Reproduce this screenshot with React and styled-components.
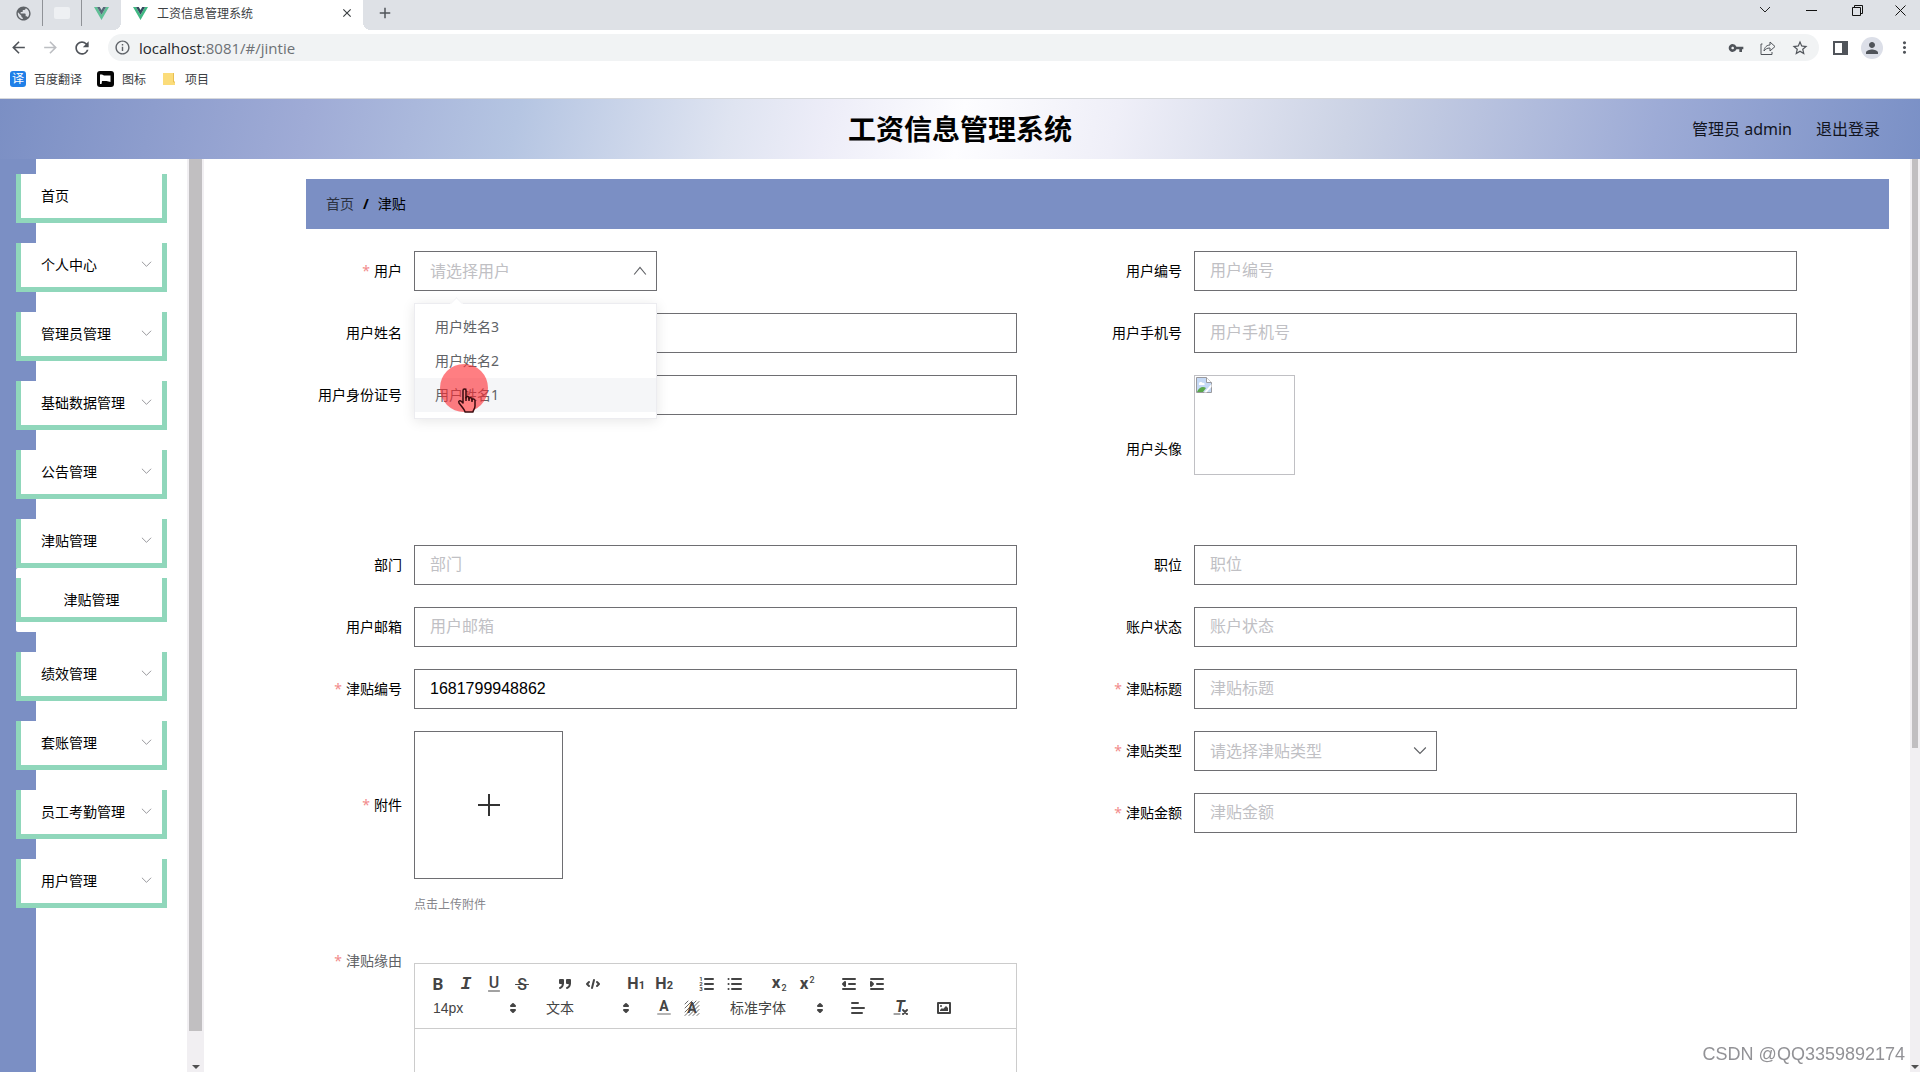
import React from 'react';
import styled, {createGlobalStyle, css} from 'styled-components';
import {
    MdArrowBack,
    MdArrowForward,
    MdRefresh,
    MdInfoOutline,
    MdVpnKey,
    MdStarBorder,
    MdPerson,
    MdMoreVert,
    MdPublic,
    MdClose,
    MdAdd
} from 'react-icons/md';

const BLUE = '#7b8fc4';
const GREEN = '#90d7bb';

const GlobalStyle = createGlobalStyle`
    * {
        box-sizing: border-box;
    }
    body {
        margin: 0;
        background: #fff;
        color: #000;
        font-family: "Noto Sans", "Noto Sans CJK SC", sans-serif;
        font-size: 14px;
    }
    button, input, select {
        font: inherit;
        color: inherit;
        margin: 0;
        padding: 0;
        border: 0;
        background: none;
    }
    a {
        color: inherit;
        text-decoration: none;
    }
    ul {
        list-style: none;
        margin: 0;
        padding: 0;
    }
`;

const Page = styled.div`
    display: flex;
    flex-direction: column;
    height: 100vh;
    overflow: hidden;
`;

/* browser bars */

const TabStrip = styled.div`
    display: flex;
    height: 30px;
    padding-left: 4px;
    background: #dee1e6;
`;

const PinnedTab = styled.button`
    display: flex;
    align-items: center;
    justify-content: center;
    width: 39px;
    height: 26px;
    border-right: 1px solid ${props => (props.$last ? 'transparent' : '#8f9297')};
    color: #5f6368;
    opacity: ${props => (props.$faded ? 0.8 : 1)};
`;

const BlankIcon = styled.span`
    width: 16px;
    height: 12px;
    border-radius: 2px;
    background: #eef0f3;
`;

const ActiveTab = styled.div`
    position: relative;
    display: flex;
    align-items: center;
    gap: 9px;
    width: 242px;
    height: 30px;
    margin-right: 12px;
    padding: 0 9px 4px 12px;
    background: #fff;
    font-size: 12px;
    color: #3c4043;

    &::before, &::after {
        content: '';
        position: absolute;
        bottom: 0;
        width: 8px;
        height: 8px;
    }
    &::before {
        left: -8px;
        background: radial-gradient(circle at 0 0, transparent 8px, #fff 8px);
    }
    &::after {
        right: -8px;
        background: radial-gradient(circle at 100% 0, transparent 8px, #fff 8px);
    }
`;

const TabTitle = styled.span`
    flex: 1;
`;

const IconButton = styled.button`
    display: flex;
    align-items: center;
    justify-content: center;
    width: ${props => props.$width || 32}px;
    height: 26px;
    color: ${props => props.$color || '#50545a'};
`;

const WindowButtons = styled.div`
    display: flex;
    align-items: center;
    height: 20px;
    margin-left: auto;
`;

const AddressRow = styled.div`
    display: flex;
    align-items: center;
    height: 35px;
    padding: 0 0 0 2px;
`;

const AddressBar = styled.div`
    display: flex;
    flex: 1;
    align-items: center;
    height: 27px;
    margin: 0 5px 0 10px;
    padding: 0 3px 0 6px;
    border-radius: 14px;
    background: #f1f3f4;
    color: #5f6368;
`;

const Address = styled.div`
    flex: 1;
    padding-left: 8px;
    font-family: "Open Sans", sans-serif;
    font-size: 15px;
    color: #6d7175;

    b {
        font-weight: 400;
        color: #26282b;
    }
`;

const Avatar = styled.span`
    display: flex;
    align-items: center;
    justify-content: center;
    width: 22px;
    height: 22px;
    border-radius: 50%;
    background: #dcdfe8;
`;

const BookmarkBar = styled.nav`
    display: flex;
    align-items: center;
    gap: 15px;
    height: 34px;
    padding: 0 10px 5px;
    border-bottom: 1px solid #d6d8dc;
    font-size: 12px;
    color: #3c4043;
`;

const Bookmark = styled.a`
    display: flex;
    align-items: center;
    gap: 8px;
`;

const Badge = styled.span`
    width: 16px;
    height: 16px;
    border-radius: 3px;
    background: #2080e8;
    color: #fff;
    line-height: 16px;
    text-align: center;
`;

/* page header */

const Header = styled.header`
    display: grid;
    grid-template-columns: 1fr auto 1fr;
    flex: none;
    align-items: center;
    height: 60px;
    padding: 0 40px;
    background: linear-gradient(102deg, #7b8fc4 0%, #9fabd6 16%, #b5c5e2 27%, #dfe4f1 38%, #ededf8 43%, #fdfdff 50%, #efeff8 58%, #ccd3e5 70%, #9dabd6 86%, #7a90c6 100%);
`;

const Title = styled.h1`
    grid-column: 2;
    margin: 0;
    font-size: 28px;
    font-weight: 700;
    line-height: 60px;
`;

const Account = styled.div`
    display: flex;
    justify-content: flex-end;
    gap: 24px;
    padding-bottom: 2px;
    font-size: 16px;
    color: #12151f;
`;

const Body = styled.div`
    display: flex;
    flex: 1;
    min-height: 0;
`;

/* side menu */

const Menu = styled.nav`
    display: flex;
    flex-direction: column;
    flex: none;
    gap: 20px;
    width: 187px;
    padding: 15px 20px 0 16px;
    background: linear-gradient(to right, ${BLUE} 36px, #fff 36px);
`;

const menuBox = css`
    border: 5px solid ${GREEN};
    border-top: 0;
    background: #fff;
`;

const MenuItem = styled.button`
    display: flex;
    align-items: center;
    justify-content: space-between;
    width: 100%;
    height: 49px;
    padding: 0 10px 2px 20px;
    ${menuBox}
`;

const SubMenu = styled.ul`
    padding: 10px 0;
    border-radius: 2px;
    background: #fff;
`;

const SubLink = styled.a`
    display: block;
    height: 44px;
    line-height: 44px;
    text-align: center;
    ${menuBox}
`;

const Scrollbar = styled.div`
    display: flex;
    flex-direction: column;
    flex: none;
    justify-content: space-between;
    align-items: center;
    width: ${props => props.$width}px;
    overflow: hidden;
    background: #f1eff2;
`;

const Thumb = styled.div`
    width: calc(100% - 4px);
    height: ${props => props.$size}%;
    background: #c1bfc1;
`;

const ScrollArrow = styled.span`
    margin-bottom: 3px;
    border: 4px solid transparent;
    border-top-color: #505050;
    border-bottom: 0;
`;

/* form */

const Main = styled.main`
    flex: 1;
    min-width: 0;
    overflow: hidden;
    padding: 20px 21px 0 102px;
`;

const Breadcrumb = styled.nav`
    display: flex;
    align-items: center;
    gap: 9px;
    height: 50px;
    padding: 0 20px 2px;
    background: ${BLUE};

    a {
        color: #2b3140;
    }
    span {
        font-weight: 700;
    }
`;

const Form = styled.form`
    display: grid;
    grid-template-columns: 1fr 1fr;
    gap: 22px 0;
    padding: 22px 23px 0 0;
`;

const FieldRow = styled.div`
    display: grid;
    grid-template-columns: 96px 1fr;
    gap: 0 12px;
    align-items: start;
    grid-column: ${props => props.$column || 'auto'};
    grid-row: ${props => (props.$span ? `span ${props.$span}` : 'auto')};
    padding-right: 69px;
`;

const Label = styled.label`
    line-height: ${props => (props.$tall ? 148 : 40)}px;
    text-align: right;
    white-space: nowrap;
    color: ${props => (props.$soft ? '#606266' : '#000')};
`;

const Star = styled.span`
    margin-right: 4px;
    color: #f28b8b;
`;

const boxed = css`
    height: 40px;
    border: 1px solid #6e6e72;
    background: #fff;
    font-family: "Liberation Sans", "Noto Sans CJK SC", sans-serif;
    font-size: 16px;
`;

const TextInput = styled.input`
    width: 100%;
    padding: 0 15px;
    ${boxed}

    &::placeholder {
        color: #c0c0c4;
    }
`;

const SelectWrap = styled.div`
    position: relative;
    width: 243px;

    > svg {
        position: absolute;
        top: 13px;
        right: 10px;
        pointer-events: none;
    }
`;

const Select = styled.select`
    width: 100%;
    padding: 0 15px;
    appearance: none;
    color: #c0c0c4;
    ${boxed}
`;

const Popper = styled.ul`
    position: absolute;
    z-index: 2;
    top: 52px;
    left: 0;
    width: 100%;
    padding: 6px 0;
    border: 1px solid #ececf0;
    background: #fff;
    box-shadow: 0 2px 12px rgba(0, 0, 0, 0.1);

    &::before {
        content: '';
        position: absolute;
        top: -5px;
        left: 37px;
        width: 8px;
        height: 8px;
        border: 1px solid #f4f4f6;
        border-width: 1px 0 0 1px;
        background: #fff;
        transform: rotate(45deg);
    }
`;

const Option = styled.li`
    padding: 0 20px;
    line-height: 34px;
    color: #606266;
    background: ${props => (props.$hover ? '#f5f6f8' : 'transparent')};
`;

const Pointer = styled.div`
    position: absolute;
    top: 60px;
    left: 25px;
    width: 48px;
    height: 48px;
    padding: 24px 0 0 17px;
    border-radius: 50%;
    background: rgba(255, 40, 46, 0.6);
`;

const Photo = styled.div`
    width: 101px;
    height: 100px;
    padding: 1px;
    border: 1px solid #c0c0c4;
`;

const Upload = styled.button`
    display: flex;
    align-items: center;
    justify-content: center;
    width: 149px;
    height: 148px;
    border: 1px solid #6e6e72;
`;

const Tip = styled.div`
    margin: 14px 0 2px;
    font-size: 12px;
    line-height: 24px;
    color: #86868c;
`;

/* rich text editor */

const Editor = styled.div`
    margin-top: 22px;
    border: 1px solid #ccc;
    font-family: "Liberation Sans", "Noto Sans CJK SC", sans-serif;
    color: #444;
`;

const Tools = styled.div`
    display: flex;
    flex-direction: column;
    padding: 8px;
    border-bottom: 1px solid #ccc;
`;

const ToolRow = styled.div`
    display: flex;
    gap: 15px;
    padding-left: 1px;
`;

const ToolGroup = styled.div`
    display: flex;
`;

const Tool = styled.button`
    display: flex;
    align-items: center;
    justify-content: center;
    width: 28px;
    height: 24px;

    svg {
        overflow: visible;
    }
    svg text {
        font-family: Roboto, "Liberation Sans", sans-serif;
        font-weight: 700;
        fill: #444;
    }
`;

const Picker = styled.div`
    position: relative;
    width: ${props => props.$width}px;
    height: 24px;

    select {
        width: 100%;
        height: 24px;
        padding: 0 20px 0 9px;
        appearance: none;
    }
    svg {
        position: absolute;
        top: 3px;
        right: 0;
        pointer-events: none;
    }
`;

const TextArea = styled.div`
    min-height: 200px;
    padding: 12px 15px;
    outline: none;
`;

const Watermark = styled.div`
    position: fixed;
    right: 15px;
    bottom: 6px;
    font-family: "Liberation Sans", sans-serif;
    font-size: 18px;
    line-height: 24px;
    color: #929296;
`;

const VueLogo = () => (
    <svg width="15" height="13" viewBox="0 0 15 13">
        <path d="M0 0h3l4.500 7.800L12 0h3L7.500 13z" fill="#41b883" />
        <path d="M3 0h2.800l1.700 3L9.200 0H12L7.500 7.800z" fill="#35495e" />
    </svg>
);

const Chevron = ({size = 12, up = false, color = '#8f8f94'}) => (
    <svg width={size} height={size} viewBox="0 0 12 12" fill="none" stroke={color}>
        <path d={up ? 'M1 9l5-6 5 6' : 'M1 3l5 5 5-5'} />
    </svg>
);

const Hand = () => (
    <svg width="20" height="25" viewBox="0 0 20 25" fill="#ff7f80" stroke="#3a0d10" strokeWidth="1.500" strokeLinejoin="round">
        <path d="M6 15V2.500C6 .5 9 .5 9 2.500V10c0-2 3-2 3 0v1c0-2 3-1.500 3 0v1c0-1.500 3-1.500 3 .5V18c0 3-2 4-2 6H8c0-2-3-5-6-9-1-2 1-3 2.500-1.500z" />
        <path d="M9 9v4M12 10v3M15 11v3" />
    </svg>
);

const BrokenImage = () => (
    <svg width="16" height="16" viewBox="0 0 16 16" role="img" aria-label="用户头像">
        <path d="M.5.5h10l5 5v10H.5z" fill="#c5d9f5" stroke="#9a9a9e" />
        <path d="M10.500.5v5h5" fill="#fff" stroke="#9a9a9e" />
        <path d="M3 6.500c0-2 3-2 3.500-.5 1.500-.5 2.500.5 2 2H3z" fill="#fff" />
        <path d="M1 15c2-5 6-6 9-4l-3 4z" fill="#5aa84a" />
        <path d="M8 15.500L15.500 7v3L10.500 15.500z" fill="#fff" />
    </svg>
);

const ToolIcon = ({children}) => (
    <svg width="18" height="18" viewBox="0 0 18 18" fill="none" stroke="#444" strokeWidth="2" strokeLinecap="round" strokeLinejoin="round">
        {children}
    </svg>
);

const Glyph = props => <text x="9" y="14" textAnchor="middle" fontSize="15" stroke="none" {...props} />;

const Arrows = () => (
    <ToolIcon>
        <path d="M7 11l2 2 2-2zM7 7l2-2 2 2z" fill="#444" />
    </ToolIcon>
);

const icons = {
    bold: <Glyph y="15" fontSize="17">B</Glyph>,
    italic: <Glyph fontSize="18" fontStyle="italic" style={{fontFamily: 'Liberation Mono'}}>I</Glyph>,
    underline: <><Glyph y="13" fontSize="16" style={{fontWeight: 500}}>U</Glyph><path d="M3.500 16h11" strokeWidth="1" /></>,
    strike: <><Glyph y="15" fontSize="16" style={{fontWeight: 500}}>S</Glyph><path d="M2.500 9.500h13" strokeWidth="1" /></>,
    quote: (
        <>
            <path d="M4 5h3v3H4zM11 5h3v3h-3z" fill="#444" />
            <path d="M7 8c0 4-3 5-3 5M14 8c0 4-3 5-3 5" />
        </>
    ),
    code: <path d="M5 7L3 9l2 2M13 7l2 2-2 2M10 5L8 13" strokeWidth="2" />,
    h1: <><Glyph x="6" fontSize="16">H</Glyph><Glyph x="15" fontSize="11">1</Glyph></>,
    h2: <><Glyph x="6" fontSize="16">H</Glyph><Glyph x="15" fontSize="11">2</Glyph></>,
    ordered: (
        <>
            <path d="M7 4h8M7 9h8M7 14h8" />
            <Glyph x="3" y="6" fontSize="6">1</Glyph>
            <Glyph x="3" y="11" fontSize="6">2</Glyph>
            <Glyph x="3" y="16" fontSize="6">3</Glyph>
        </>
    ),
    bullet: <path d="M6 4h9M6 9h9M6 14h9M2.500 4h.1M2.500 9h.1M2.500 14h.1" />,
    sub: <><Glyph x="7" y="13" fontSize="17">x</Glyph><Glyph x="15" y="16" fontSize="9" style={{fontWeight: 500}}>2</Glyph></>,
    sup: <><Glyph x="7" y="14" fontSize="17">x</Glyph><Glyph x="15" y="8" fontSize="9" style={{fontWeight: 500}}>2</Glyph></>,
    outdent: (
        <>
            <path d="M3 14h12M3 4h12M9 9h6" />
            <path d="M5 7v4L3 9z" fill="#444" />
        </>
    ),
    indent: (
        <>
            <path d="M3 14h12M3 4h12M9 9h6" />
            <path d="M3 7v4l2-2z" fill="#444" />
        </>
    ),
    color: <><Glyph y="12" fontSize="14">A</Glyph><path d="M3 15h12" strokeOpacity="0.4" /></>,
    background: (
        <>
            <path d="M2 5l3-3M2 9l7-7M2 13L13 2M2 16.500L16 2.500M6 16.500L16 6.500M10 16.500l6-6M14 16.500l2-2" strokeWidth="1" strokeOpacity="0.800" />
            <Glyph y="14" fontSize="14">A</Glyph>
        </>
    ),
    align: <path d="M3 9h12M3 14h10M3 4h6" />,
    clean: (
        <>
            <Glyph x="8" y="13" fontSize="16" fontStyle="italic">T</Glyph>
            <path d="M2 15h6" strokeWidth="1" />
            <path d="M11 11l4 4M15 11l-4 4" />
        </>
    ),
    image: (
        <>
            <path d="M3 4h12v10H3z" />
            <circle cx="6" cy="7" r="1" fill="#444" stroke="none" />
            <path d="M5 12v-1l2-2 1 1 3-3 2 2v3z" fill="#444" stroke="none" />
        </>
    )
};

const formatTools = [
    ['bold', 'italic', 'underline', 'strike'],
    ['quote', 'code'],
    ['h1', 'h2'],
    ['ordered', 'bullet'],
    ['sub', 'sup'],
    ['outdent', 'indent']
];

const ToolSet = ({names}) => (
    <ToolGroup>
        {names.map(name => (
            <Tool type="button" key={name} aria-label={name}>
                <ToolIcon>{icons[name]}</ToolIcon>
            </Tool>
        ))}
    </ToolGroup>
);

const ToolPicker = ({label, value, width}) => (
    <Picker $width={width}>
        <select aria-label={label}>
            <option>{value}</option>
        </select>
        <Arrows />
    </Picker>
);

const Field = ({id, label, required, tall, soft, children, ...rest}) => (
    <FieldRow {...rest}>
        <Label htmlFor={id} $tall={tall} $soft={soft}>
            {required && <Star>*</Star>}
            {label}
        </Label>
        <div>{children}</div>
    </FieldRow>
);

const TextField = ({id, label, value, required}) => (
    <Field id={id} label={label} required={required}>
        <TextInput id={id} placeholder={label} defaultValue={value} />
    </Field>
);

const menus = [
    {name: '个人中心'},
    {name: '管理员管理'},
    {name: '基础数据管理'},
    {name: '公告管理'},
    {name: '津贴管理', children: ['津贴管理']},
    {name: '绩效管理'},
    {name: '套账管理'},
    {name: '员工考勤管理'},
    {name: '用户管理'}
];

const Browser = () => (
    <div>
        <TabStrip>
            <PinnedTab aria-label="tab 1"><MdPublic size={17} /></PinnedTab>
            <PinnedTab aria-label="tab 2"><BlankIcon /></PinnedTab>
            <PinnedTab aria-label="tab 3" $last $faded><VueLogo /></PinnedTab>
            <ActiveTab>
                <VueLogo />
                <TabTitle>工资信息管理系统</TabTitle>
                <MdClose size={14} />
            </ActiveTab>
            <IconButton $width={20} aria-label="new tab"><MdAdd size={18} /></IconButton>
            <WindowButtons>
                <IconButton $width={46} aria-label="search tabs"><Chevron color="#222" /></IconButton>
                <IconButton $width={46} aria-label="minimize">
                    <svg width="11" height="11" stroke="#111"><path d="M0 5.500h11" /></svg>
                </IconButton>
                <IconButton $width={46} aria-label="restore">
                    <svg width="11" height="11" fill="none" stroke="#111"><path d="M.5 2.500h8v8h-8zM2.500 2.500v-2h8v8h-2" /></svg>
                </IconButton>
                <IconButton $width={40} aria-label="close">
                    <svg width="11" height="11" stroke="#111"><path d="M.5.5l10 10M10.500.5l-10 10" /></svg>
                </IconButton>
            </WindowButtons>
        </TabStrip>
        <AddressRow>
            <IconButton aria-label="back"><MdArrowBack size={19} /></IconButton>
            <IconButton $color="#bcbec2" aria-label="forward"><MdArrowForward size={19} /></IconButton>
            <IconButton aria-label="reload"><MdRefresh size={20} /></IconButton>
            <AddressBar>
                <MdInfoOutline size={17} />
                <Address><b>localhost</b>:8081/#/jintie</Address>
                <IconButton aria-label="password"><MdVpnKey size={16} /></IconButton>
                <IconButton aria-label="share">
                    <svg width="16" height="16" viewBox="0 0 16 16" fill="none" stroke="#50545a" strokeLinejoin="round">
                        <path d="M2.500 4H1v10.500h11V12M4 11c.5-4 3-6 6-6V2l5 4.500L10 11V8C7 8 5.500 9 4 11z" />
                    </svg>
                </IconButton>
                <IconButton aria-label="star"><MdStarBorder size={18} /></IconButton>
            </AddressBar>
            <IconButton aria-label="side panel">
                <svg width="15" height="14"><path d="M1 1h13v12H1z" fill="none" stroke="#50545a" strokeWidth="2" /><path d="M9 1h5v12H9z" fill="#50545a" /></svg>
            </IconButton>
            <IconButton aria-label="profile"><Avatar><MdPerson size={18} /></Avatar></IconButton>
            <IconButton aria-label="more"><MdMoreVert size={19} /></IconButton>
        </AddressRow>
        <BookmarkBar>
            <Bookmark href="#fanyi"><Badge>译</Badge>百度翻译</Bookmark>
            <Bookmark href="#icons">
                <svg width="17" height="16" viewBox="0 0 17 16">
                    <rect width="17" height="16" rx="3" fill="#050505" />
                    <path d="M3 13V3.500h2l2 1h6.500v6.500l-4-1H5L4.500 13z" fill="#fff" />
                </svg>
                图标
            </Bookmark>
            <Bookmark href="#project">
                <svg width="16" height="14" viewBox="0 0 16 14">
                    <path d="M2 1h11v9h1v3H2z" fill="#fbdc7a" />
                    <path d="M12.500 1v9H14" fill="none" stroke="#e8bf52" />
                </svg>
                项目
            </Bookmark>
        </BookmarkBar>
    </div>
);

const SideMenu = () => (
    <Menu>
        <MenuItem as="a" href="#/">首页</MenuItem>
        {menus.map(item => (
            <div key={item.name}>
                <MenuItem type="button">
                    {item.name}
                    <Chevron size={11} />
                </MenuItem>
                {item.children && (
                    <SubMenu>
                        {item.children.map(name => (
                            <li key={name}><SubLink href="#/jintie">{name}</SubLink></li>
                        ))}
                    </SubMenu>
                )}
            </div>
        ))}
    </Menu>
);

const JintieForm = () => (
    <Form>
        <Field id="yonghu" label="用户" required>
            <SelectWrap>
                <Select id="yonghu">
                    <option>请选择用户</option>
                </Select>
                <Chevron size={14} up color="#606266" />
                <Popper>
                    <Option>用户姓名3</Option>
                    <Option>用户姓名2</Option>
                    <Option $hover>用户姓名1</Option>
                    <Pointer as="li"><Hand /></Pointer>
                </Popper>
            </SelectWrap>
        </Field>
        <TextField id="bianhao" label="用户编号" />
        <TextField id="xingming" label="用户姓名" />
        <TextField id="shouji" label="用户手机号" />
        <TextField id="shenfenzheng" label="用户身份证号" />
        <Field label="用户头像" tall>
            <Photo><BrokenImage /></Photo>
        </Field>
        <TextField id="bumen" label="部门" />
        <TextField id="zhiwei" label="职位" />
        <TextField id="youxiang" label="用户邮箱" />
        <TextField id="zhuangtai" label="账户状态" />
        <TextField id="jintieBianhao" label="津贴编号" value="1681799948862" required />
        <TextField id="biaoti" label="津贴标题" required />
        <Field id="fujian" label="附件" required tall $span={3}>
            <Upload id="fujian" type="button" aria-label="附件">
                <svg width="22" height="22" stroke="#333" strokeWidth="2"><path d="M11 0v22M0 11h22" /></svg>
            </Upload>
            <Tip>点击上传附件</Tip>
        </Field>
        <Field id="leixing" label="津贴类型" required>
            <SelectWrap>
                <Select id="leixing">
                    <option>请选择津贴类型</option>
                </Select>
                <Chevron size={14} color="#606266" />
            </SelectWrap>
        </Field>
        <TextField id="jine" label="津贴金额" required />
        <Field id="yuanyou" label="津贴缘由" required soft $column={1}>
            <Editor>
                <Tools>
                    <ToolRow>
                        {formatTools.map(names => <ToolSet key={names[0]} names={names} />)}
                    </ToolRow>
                    <ToolRow>
                        <ToolPicker label="字号" value="14px" width={98} />
                        <ToolPicker label="标题" value="文本" width={98} />
                        <ToolSet names={['color', 'background']} />
                        <ToolPicker label="字体" value="标准字体" width={108} />
                        <ToolSet names={['align']} />
                        <ToolSet names={['clean']} />
                        <ToolSet names={['image']} />
                    </ToolRow>
                </Tools>
                <TextArea id="yuanyou" role="textbox" aria-label="津贴缘由" contentEditable suppressContentEditableWarning />
            </Editor>
        </Field>
    </Form>
);

export default () => (
    <Page>
        <GlobalStyle />
        <Browser />
        <Header>
            <Title>工资信息管理系统</Title>
            <Account>
                <span>管理员 admin</span>
                <a href="#/login">退出登录</a>
            </Account>
        </Header>
        <Body>
            <SideMenu />
            <Scrollbar $width={17}>
                <Thumb $size={95.5} />
                <ScrollArrow />
            </Scrollbar>
            <Main>
                <Breadcrumb>
                    <a href="#/">首页</a>
                    <span>/</span>
                    津贴
                </Breadcrumb>
                <JintieForm />
            </Main>
            <Scrollbar $width={10}>
                <Thumb $size={64.5} />
                <ScrollArrow />
            </Scrollbar>
        </Body>
        <Watermark>CSDN @QQ3359892174</Watermark>
    </Page>
);
